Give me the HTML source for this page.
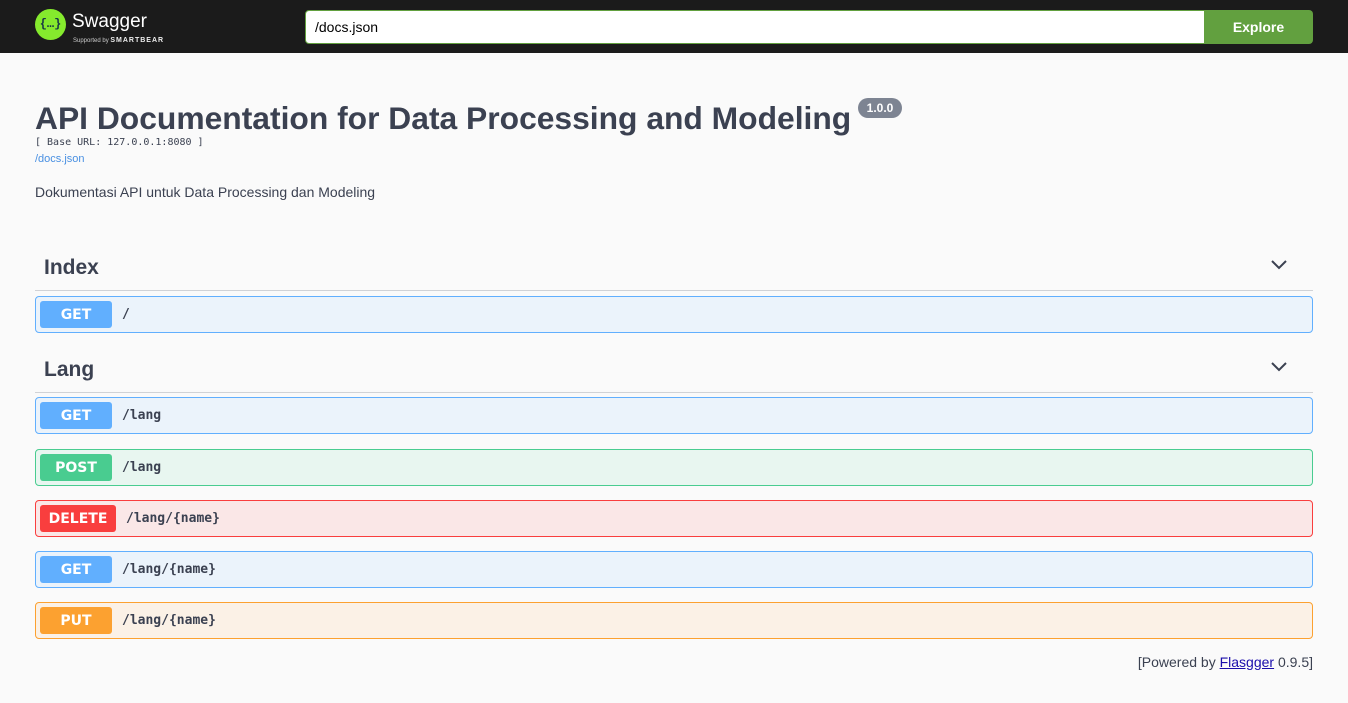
<!DOCTYPE html>
<html><head><style>
*{box-sizing:border-box;margin:0;padding:0}
body{width:1348px;height:703px;background:#fafafa;font-family:"Liberation Sans",sans-serif;color:#3b4151;position:relative;overflow:hidden}
.top{position:absolute;left:0;top:0;width:1348px;height:53px;background:#1b1b1b}
.logo{position:absolute;left:35px;top:9px;width:31px;height:31px;border-radius:50%;background:#85ea2d;color:#173647;font:bold 12px "Liberation Mono",monospace;text-align:center;line-height:31px}
.sw{position:absolute;left:72px;top:11px;color:#fff;font-size:19px}
.sb{position:absolute;left:73px;top:37px;color:#ccc;font-size:6px}
.sb b{font-size:7px;letter-spacing:1px;color:#eee}
.inp{position:absolute;left:305px;top:10px;width:900px;height:34px;background:#fff;border:1px solid #62a03f;border-radius:4px 0 0 4px;font-size:14px;padding:8px 9px;color:#000}
.btn{position:absolute;left:1204px;top:10px;width:109px;height:34px;background:#62a03f;border-radius:0 4px 4px 0;color:#fff;font-weight:bold;font-size:14px;text-align:center;line-height:34px}
h1{position:absolute;left:35px;top:100px;font-size:31.8px;font-weight:bold;color:#3b4151}
.ver{position:absolute;left:858px;top:98px;width:44px;height:20px;background:#7d8492;border-radius:57px;color:#fff;font-size:12px;font-weight:bold;text-align:center;line-height:20px}
.base{position:absolute;left:35px;top:137px;font:10px "DejaVu Sans Mono",monospace;color:#3b4151}
.lnk{position:absolute;left:35px;top:153px;font-size:11px;color:#4990e2}
.desc{position:absolute;left:35px;top:184px;font-size:14px}
.tag{position:absolute;left:35px;width:1278px;height:38px;border-bottom:1px solid #d0d2d6}
.tag span{position:absolute;left:9px;top:3px;font-size:21px;font-weight:bold;-webkit-text-stroke:0}
.tag svg{position:absolute;right:25px;top:6px}
.op{position:absolute;left:35px;width:1278px;height:37px;border:1px solid;border-radius:4px}
.op .m{position:absolute;left:4px;top:4px;width:72px;height:27px;border-radius:3px;color:#fff;font:bold 14px "DejaVu Sans",sans-serif;text-align:center;line-height:28px}
.op .p{position:absolute;left:86px;top:10px;font:bold 13px "DejaVu Sans Mono",monospace;color:#3b4151}
.g{background:#ebf3fb;border-color:#61affe}.g .m{background:#61affe}
.po{background:#e8f6f0;border-color:#49cc90}.po .m{background:#49cc90}
.d{background:#fae7e7;border-color:#f93e3e}.d .m{background:#f93e3e;width:76px}.d .p{left:90px}
.pu{background:#fbf1e6;border-color:#fca130}.pu .m{background:#fca130}
.foot{position:absolute;right:35px;top:654px;font-size:14px;color:#3b4151}
.foot a{color:#1a0dab;text-decoration:underline}
</style></head><body>
<div class="top">
<div class="logo">{…}</div>
<div class="sw">Swagger</div>
<div class="sb">Supported by <b>SMARTBEAR</b></div>
<div class="inp">/docs.json</div>
<div class="btn">Explore</div>
</div>
<h1>API Documentation for Data Processing and Modeling</h1>
<div class="ver">1.0.0</div>
<div class="base">[ Base URL: 127.0.0.1:8080 ]</div>
<div class="lnk">/docs.json</div>
<div class="desc">Dokumentasi API untuk Data Processing dan Modeling</div>
<div class="tag" style="top:253px"><span>Index</span><svg width="18" height="12" viewBox="0 0 18 12"><path d="M2 2l7 7 7-7" stroke="#3b4151" stroke-width="2" fill="none"/></svg></div>
<div class="op g" style="top:296px"><div class="m">GET</div><div class="p">/</div></div>
<div class="tag" style="top:355px"><span>Lang</span><svg width="18" height="12" viewBox="0 0 18 12"><path d="M2 2l7 7 7-7" stroke="#3b4151" stroke-width="2" fill="none"/></svg></div>
<div class="op g" style="top:397px"><div class="m">GET</div><div class="p">/lang</div></div>
<div class="op po" style="top:449px"><div class="m">POST</div><div class="p">/lang</div></div>
<div class="op d" style="top:500px"><div class="m">DELETE</div><div class="p">/lang/{name}</div></div>
<div class="op g" style="top:551px"><div class="m">GET</div><div class="p">/lang/{name}</div></div>
<div class="op pu" style="top:602px"><div class="m">PUT</div><div class="p">/lang/{name}</div></div>
<div class="foot">[Powered by <a>Flasgger</a> 0.9.5]</div>
</body></html>
